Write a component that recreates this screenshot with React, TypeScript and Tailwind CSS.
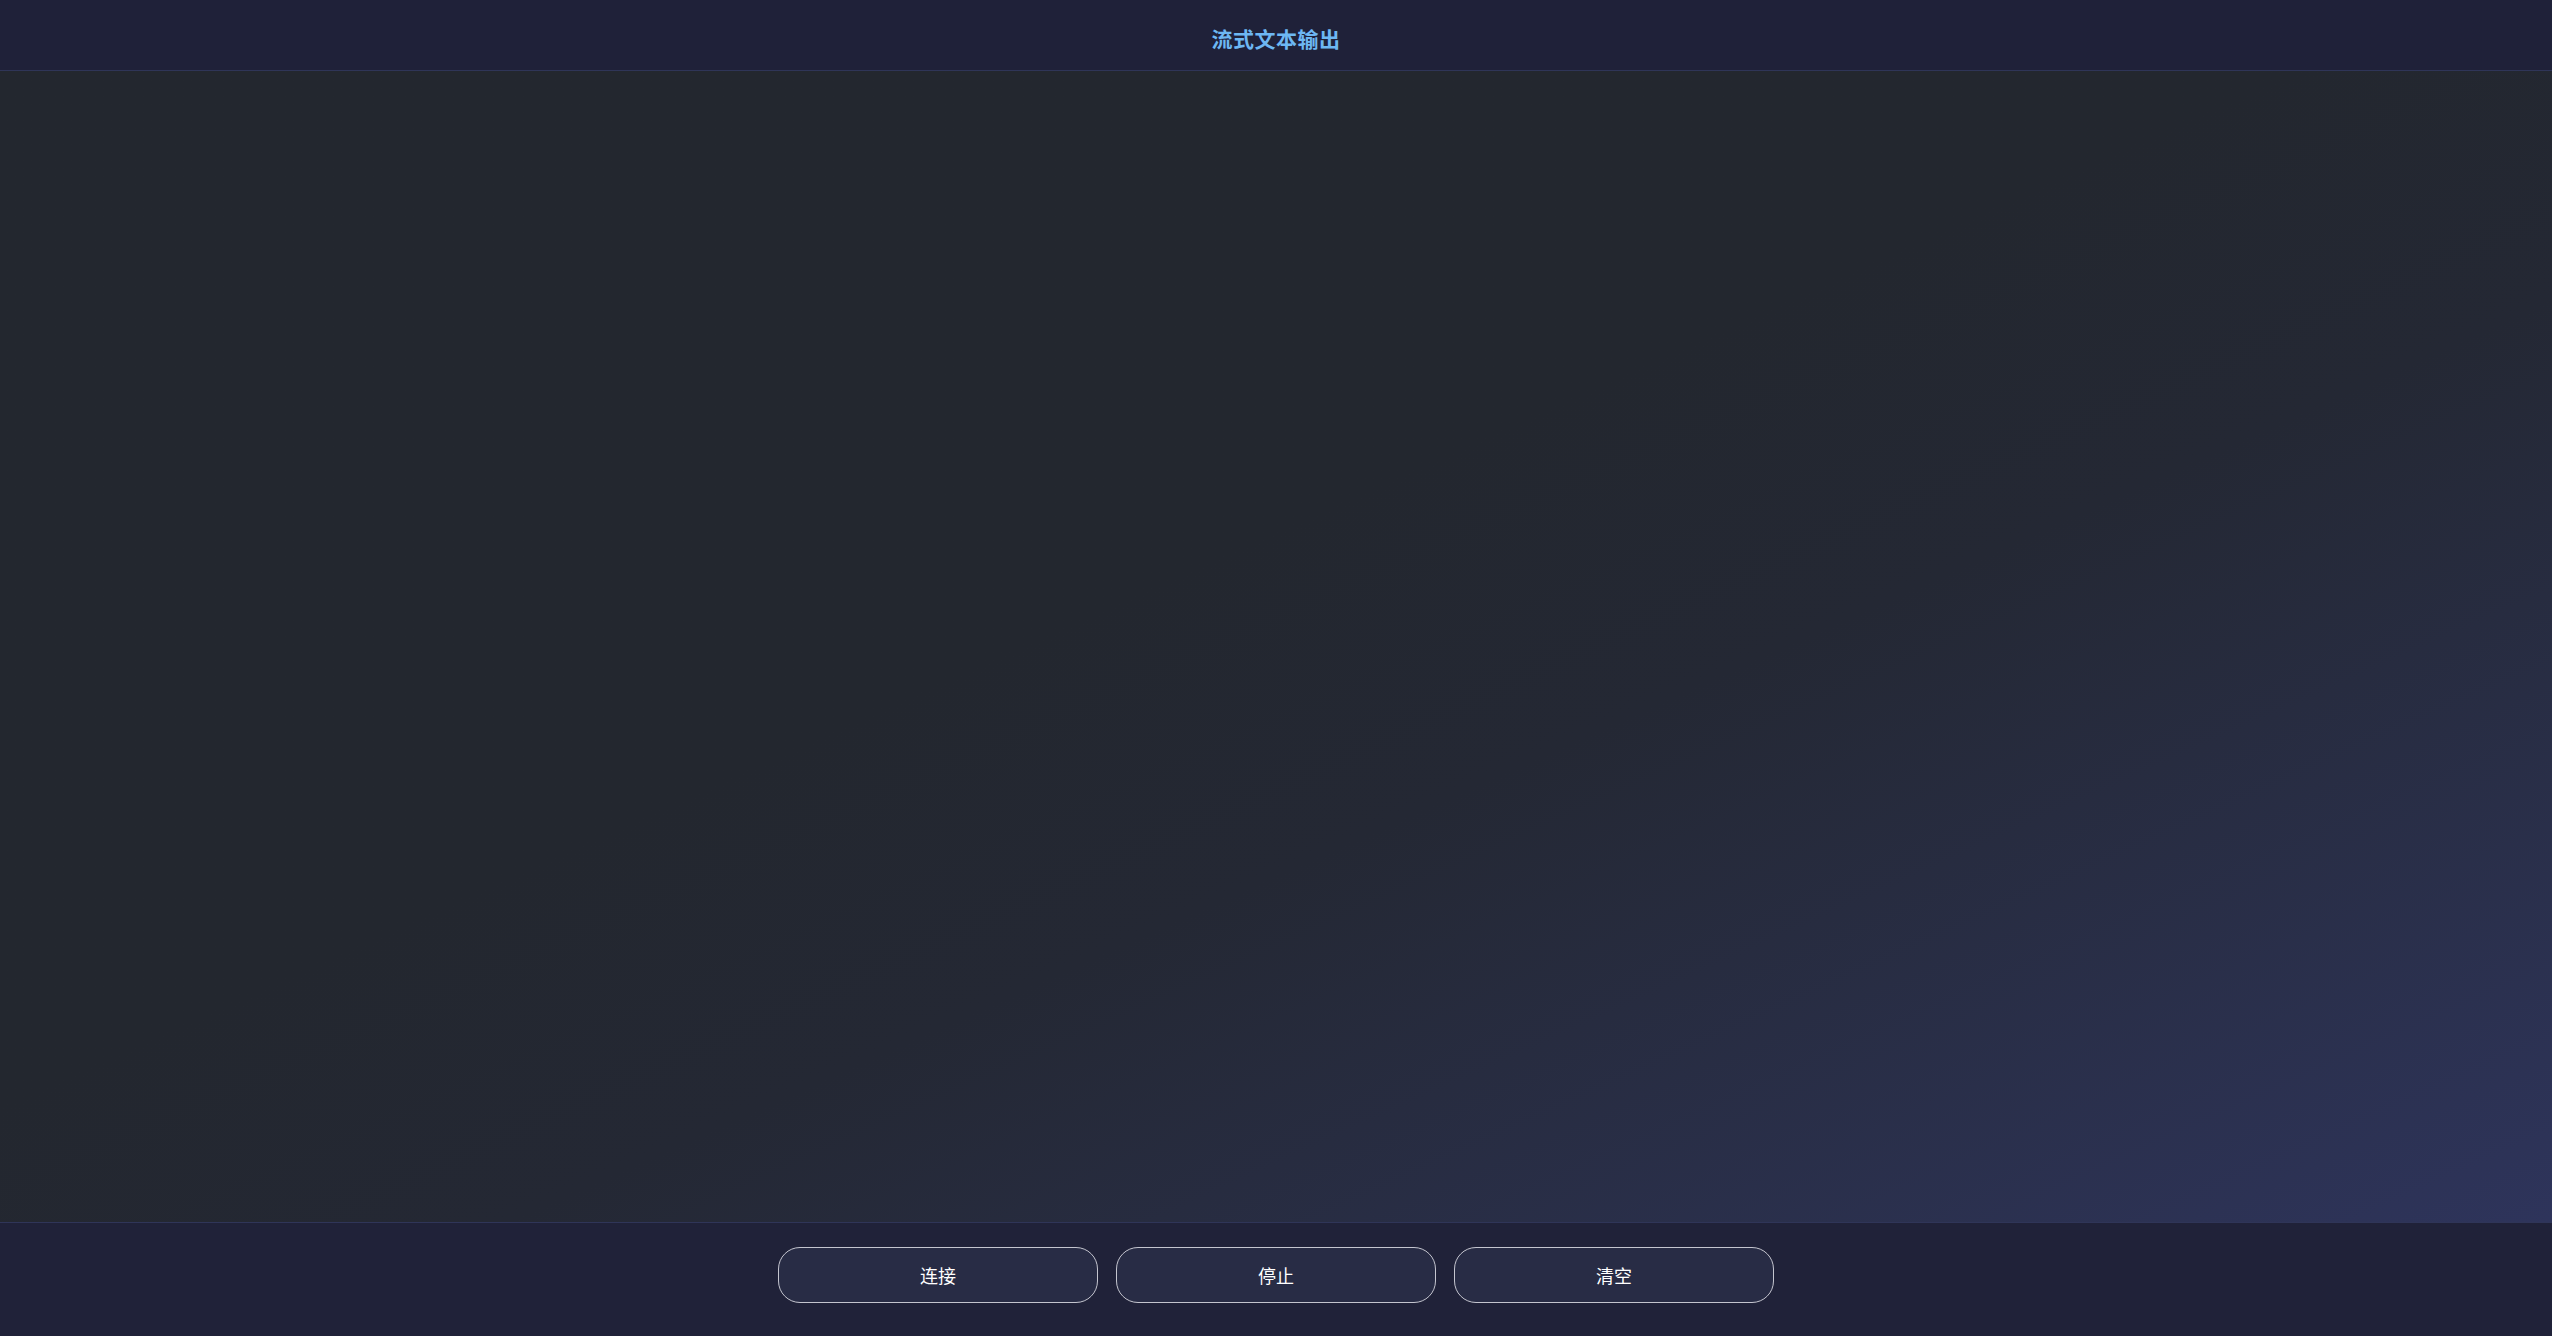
const actions = ['连接', '停止', '清空'];

export default function App() {
  return (
    <div
      className="flex h-screen w-full flex-col overflow-hidden bg-[#22262f] text-white"
      style={{ fontFamily: '"Noto Sans CJK SC", "Noto Sans", sans-serif' }}
    >
      <header className="flex h-[71px] shrink-0 items-center justify-center border-b border-[#2f3558] bg-[#1f2139] pt-[8px]">
        <h1 className="text-[21px] font-bold tracking-[0.5px] text-[#6db7f3]">流式文本输出</h1>
      </header>

      <main className="flex-1 bg-linear-to-br from-[#23272f] from-45% via-[#242834] via-60% to-[#2e345b]" />

      <footer className="flex h-[114px] shrink-0 justify-center gap-[18px] border-t border-[#2f3558] bg-[#202239] pt-[24px]">
        {actions.map((label) => (
          <button
            key={label}
            className="h-[56px] w-[320px] rounded-[22px] border border-[#c4c5cf] bg-[#282c45] text-[18px] text-white"
          >
            {label}
          </button>
        ))}
      </footer>
    </div>
  );
}
